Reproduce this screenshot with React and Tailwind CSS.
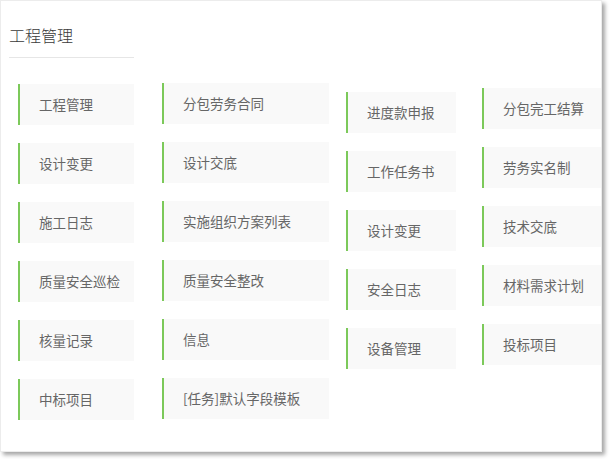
import React from "react";

const cols = [
  { w: "w-[116px]", ml: "ml-0", mt: "mt-[1px]", items: ["工程管理", "设计变更", "施工日志", "质量安全巡检", "核量记录", "中标项目"] },
  { w: "w-[167px]", ml: "ml-[28px]", mt: "mt-0", items: ["分包劳务合同", "设计交底", "实施组织方案列表", "质量安全整改", "信息", "[任务]默认字段模板"] },
  { w: "w-[110px]", ml: "ml-[17px]", mt: "mt-[9px]", items: ["进度款申报", "工作任务书", "设计变更", "安全日志", "设备管理"] },
  { w: "w-[130px]", ml: "ml-[26px]", mt: "mt-[5px]", items: ["分包完工结算", "劳务实名制", "技术交底", "材料需求计划", "投标项目"] },
];

export default function App() {
  return (
    <div className="w-[610px] h-[459px] bg-white" style={{ fontFamily: '"Noto Sans CJK SC", "Noto Sans", sans-serif' }}>
      <div className="w-[602px] h-[452px] bg-white border border-[#ececec] shadow-[3px_3px_4px_rgba(0,0,0,0.35)] overflow-hidden">
        <div className="ml-[8px] w-[125px] pt-[22px] pb-[10px] border-b border-[#e6e6e6] text-[16px] leading-[24px] text-[#3a3a3a] font-light">
          工程管理
        </div>
        <div className="flex ml-[17px] mt-[25px]">
          {cols.map((c, i) => (
            <div key={i} className={`flex flex-col gap-[18px] shrink-0 ${c.w} ${c.ml} ${c.mt}`}>
              {c.items.map((t, j) => (
                <div key={j} className="h-[41px] flex items-center border-l-2 border-[#7cc95a] bg-[#f9f9f9] pl-[19px] text-[13.5px] text-[#666] whitespace-nowrap">
                  {t}
                </div>
              ))}
            </div>
          ))}
        </div>
      </div>
    </div>
  );
}
